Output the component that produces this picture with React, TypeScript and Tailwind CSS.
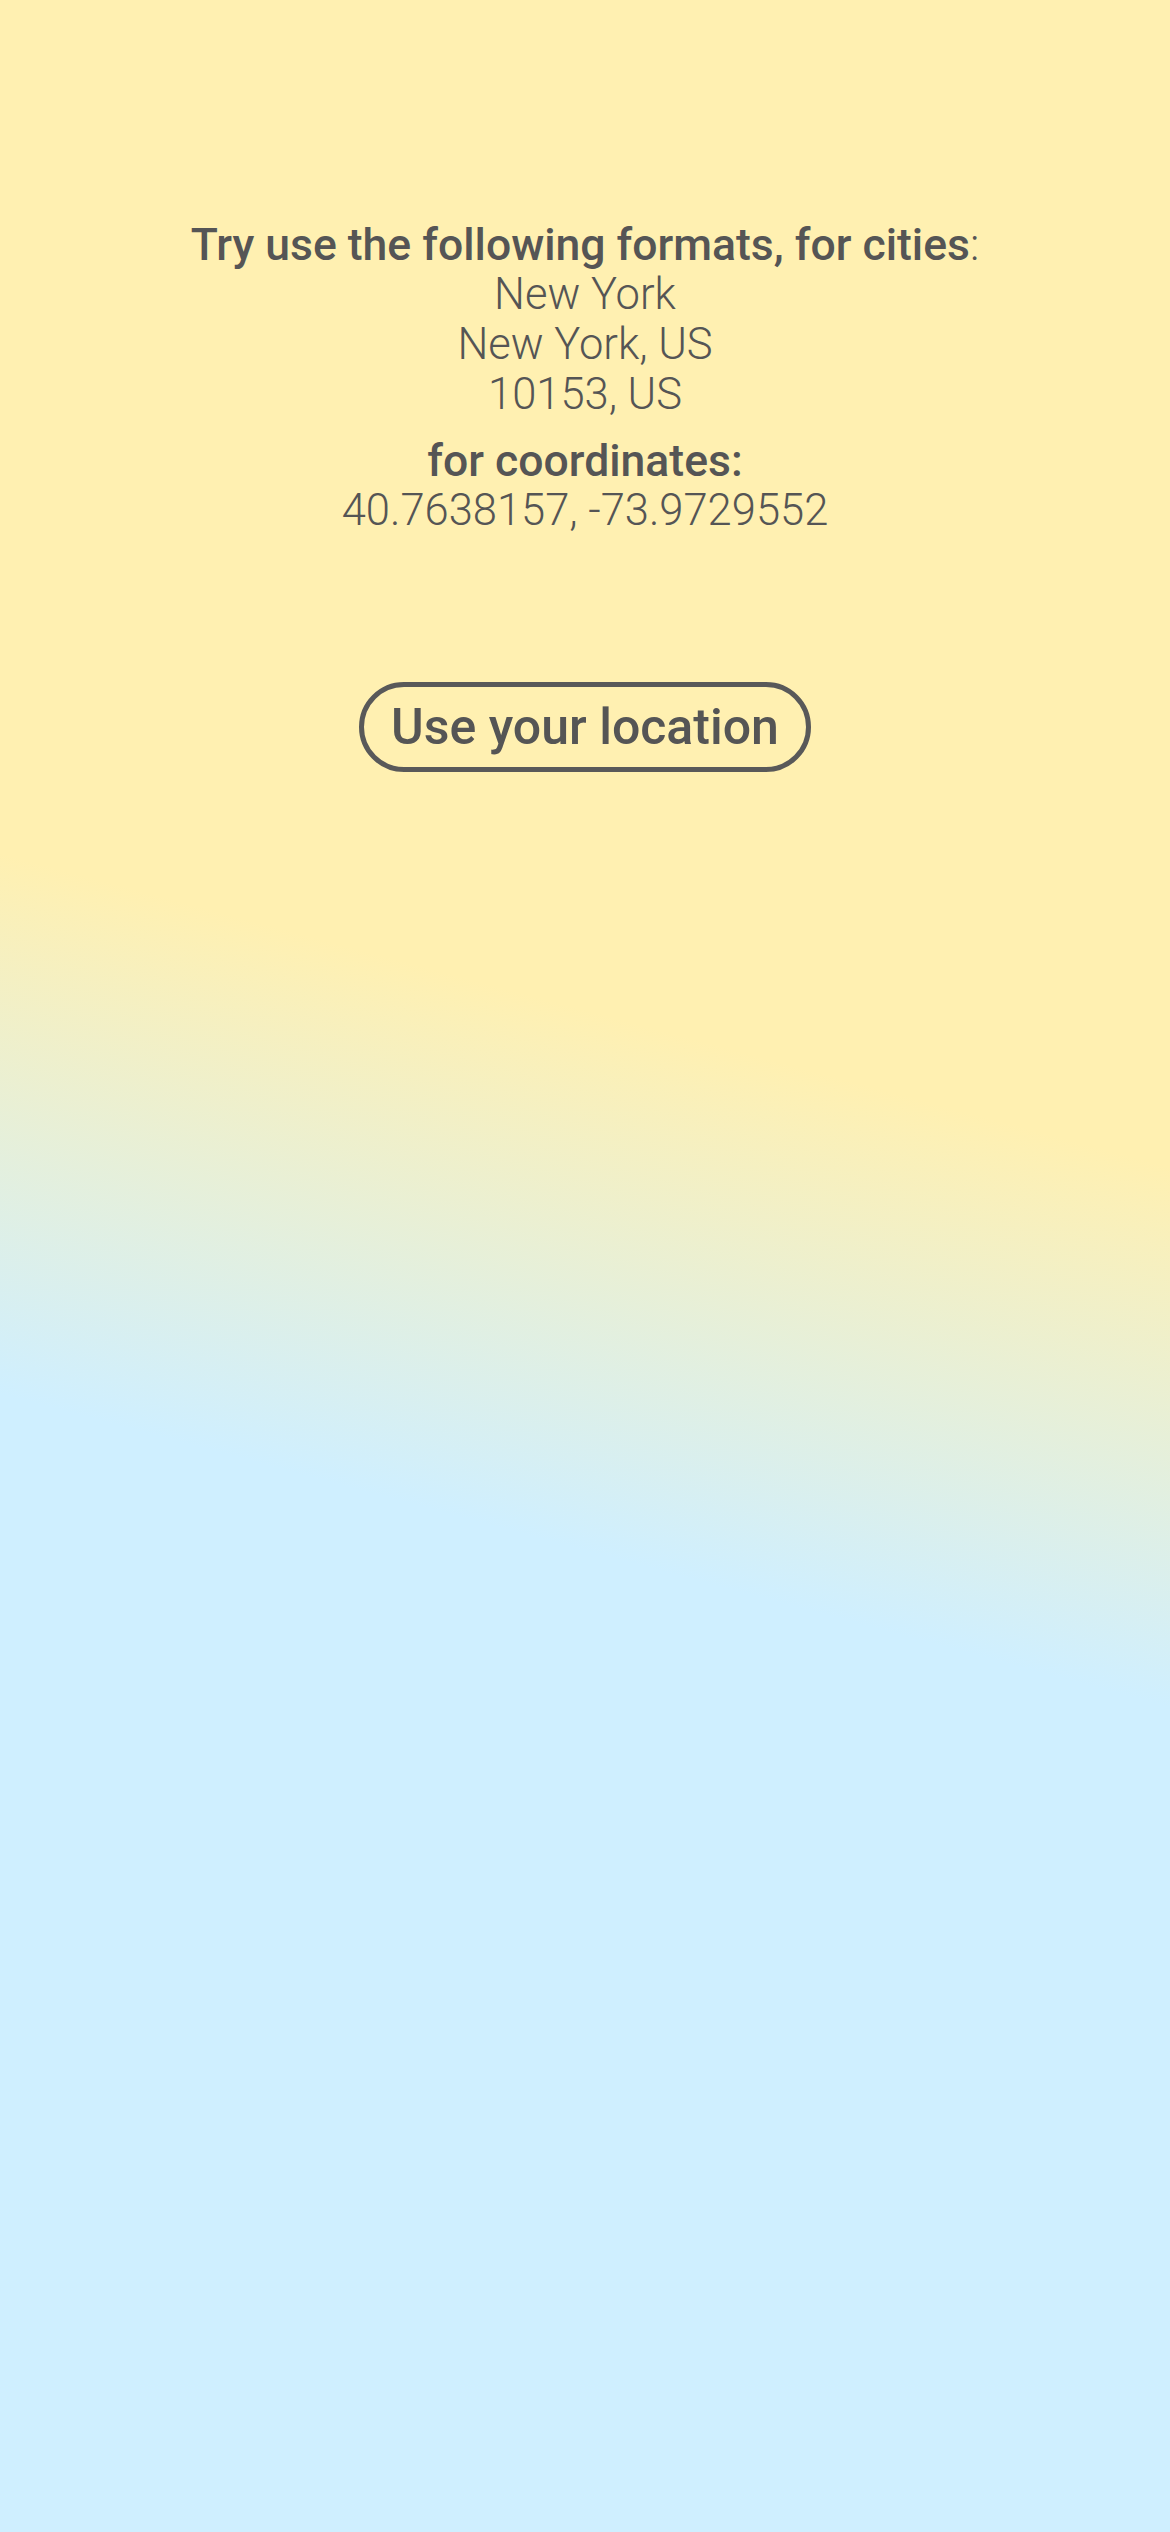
export default function App() {
  return (
    <div className="min-h-[2532px] w-full bg-[linear-gradient(195deg,#fff0b1_41%,#cfefff_60%)] text-[#555555] font-['Roboto',sans-serif]">
      <div className="flex flex-col items-center pt-[220px] text-center">
        <h2 className="text-[44.5px] leading-[50px] font-medium">
          Try use the following formats, for cities<span className="font-light">:</span>
        </h2>
        <p className="text-[43.5px] leading-[50px] font-light">New York</p>
        <p className="text-[43.5px] leading-[50px] font-light">New York, US</p>
        <p className="text-[43.5px] leading-[50px] font-light">10153, US</p>
        <h2 className="mt-4 text-[44.5px] leading-[50px] font-medium">for coordinates:</h2>
        <p className="text-[43.5px] leading-[50px] font-light">40.7638157, -73.9729552</p>

        <button className="mt-[146px] h-[90px] w-[452px] rounded-full border-[5px] border-[#595959] text-[50px] font-medium leading-none text-[#555555]">
          Use your location
        </button>
      </div>
    </div>
  );
}
